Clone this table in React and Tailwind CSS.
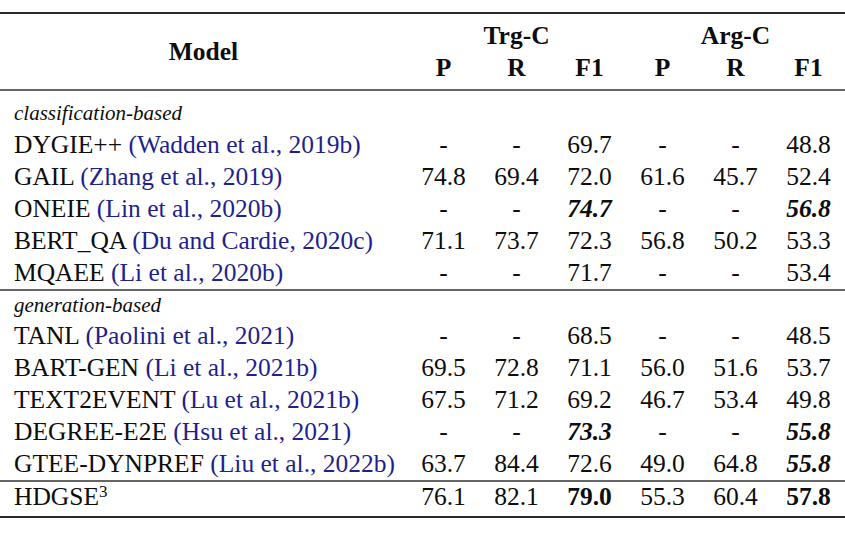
import React from 'react';

const CITE = 'text-[#1f1f8e]';

const classification = [
    { model: 'DYGIE++', cite: 'Wadden et al., 2019b', vals: ['-', '-', '69.7', '-', '-', '48.8'] },
    { model: 'GAIL', cite: 'Zhang et al., 2019', vals: ['74.8', '69.4', '72.0', '61.6', '45.7', '52.4'] },
    { model: 'ONEIE', cite: 'Lin et al., 2020b', vals: ['-', '-', '74.7', '-', '-', '56.8'], bi: [2, 5] },
    { model: 'BERT_QA', cite: 'Du and Cardie, 2020c', vals: ['71.1', '73.7', '72.3', '56.8', '50.2', '53.3'] },
    { model: 'MQAEE', cite: 'Li et al., 2020b', vals: ['-', '-', '71.7', '-', '-', '53.4'] },
];

const generation = [
    { model: 'TANL', cite: 'Paolini et al., 2021', vals: ['-', '-', '68.5', '-', '-', '48.5'] },
    { model: 'BART-GEN', cite: 'Li et al., 2021b', vals: ['69.5', '72.8', '71.1', '56.0', '51.6', '53.7'] },
    { model: 'TEXT2EVENT', cite: 'Lu et al., 2021b', vals: ['67.5', '71.2', '69.2', '46.7', '53.4', '49.8'] },
    { model: 'DEGREE-E2E', cite: 'Hsu et al., 2021', vals: ['-', '-', '73.3', '-', '-', '55.8'], bi: [2, 5] },
    { model: 'GTEE-DYNPREF', cite: 'Liu et al., 2022b', vals: ['63.7', '84.4', '72.6', '49.0', '64.8', '55.8'], bi: [5] },
];

function Cell({ v, style }) {
    const cls = style === 'bi' ? 'font-bold italic' : style === 'b' ? 'font-bold' : '';
    return <div className={`w-[73px] text-center ${cls}`}>{v}</div>;
}

function Row({ r }) {
    return (
        <div className="flex h-[32px] leading-[32px]">
            <div className="w-[407px] pl-[14px] whitespace-nowrap">
                {r.model} <span className={CITE}>({r.cite})</span>
            </div>
            {r.vals.map((v, i) => (
                <Cell key={i} v={v} style={r.bi && r.bi.includes(i) ? 'bi' : ''} />
            ))}
        </div>
    );
}

function SubHead({ label, h }) {
    return (
        <div className={`${h} leading-[28px] pl-[14px] text-[21px] italic`}>{label}</div>
    );
}

export default function App() {
    return (
        <div className="w-[845px] h-[535px] bg-white text-[#0d0d0d] text-[25.5px] font-['Liberation_Serif',serif] pt-[12px]">
            {/* top rule */}
            <div className="h-[2px] bg-[#2a2a2a]" />

            {/* header */}
            <div className="flex pt-[6px] pb-[5px] font-bold">
                <div className="w-[407px] flex items-center justify-center leading-[32px]">Model</div>
                <div className="flex flex-col">
                    <div className="flex h-[32px] leading-[32px]">
                        <div className="w-[219px] text-center">Trg-C</div>
                        <div className="w-[219px] text-center">Arg-C</div>
                    </div>
                    <div className="flex h-[32px] leading-[32px]">
                        {['P', 'R', 'F1', 'P', 'R', 'F1'].map((h, i) => (
                            <div key={i} className="w-[73px] text-center">{h}</div>
                        ))}
                    </div>
                </div>
            </div>
            <div className="h-[2px] bg-[#666]" />

            {/* classification-based */}
            <div className="pt-[8px]">
                <SubHead label="classification-based" h="h-[30px]" />
                {classification.map(r => <Row key={r.model} r={r} />)}
            </div>
            <div className="h-[2px] bg-[#666]" />

            {/* generation-based */}
            <SubHead label="generation-based" h="h-[28px]" />
            <div className="mt-[1px]">
                {generation.map(r => <Row key={r.model} r={r} />)}
            </div>
            <div className="h-[2px] bg-[#666]" />

            {/* ours */}
            <div className="flex h-[28px] leading-[28px] pt-[1px]">
                <div className="w-[407px] pl-[14px]">
                    HDGSE<sup className="text-[17px]">3</sup>
                </div>
                <Cell v="76.1" />
                <Cell v="82.1" />
                <Cell v="79.0" style="b" />
                <Cell v="55.3" />
                <Cell v="60.4" />
                <Cell v="57.8" style="b" />
            </div>
            <div className="h-[2px] bg-[#2a2a2a] mt-[6px]" />
        </div>
    );
}
